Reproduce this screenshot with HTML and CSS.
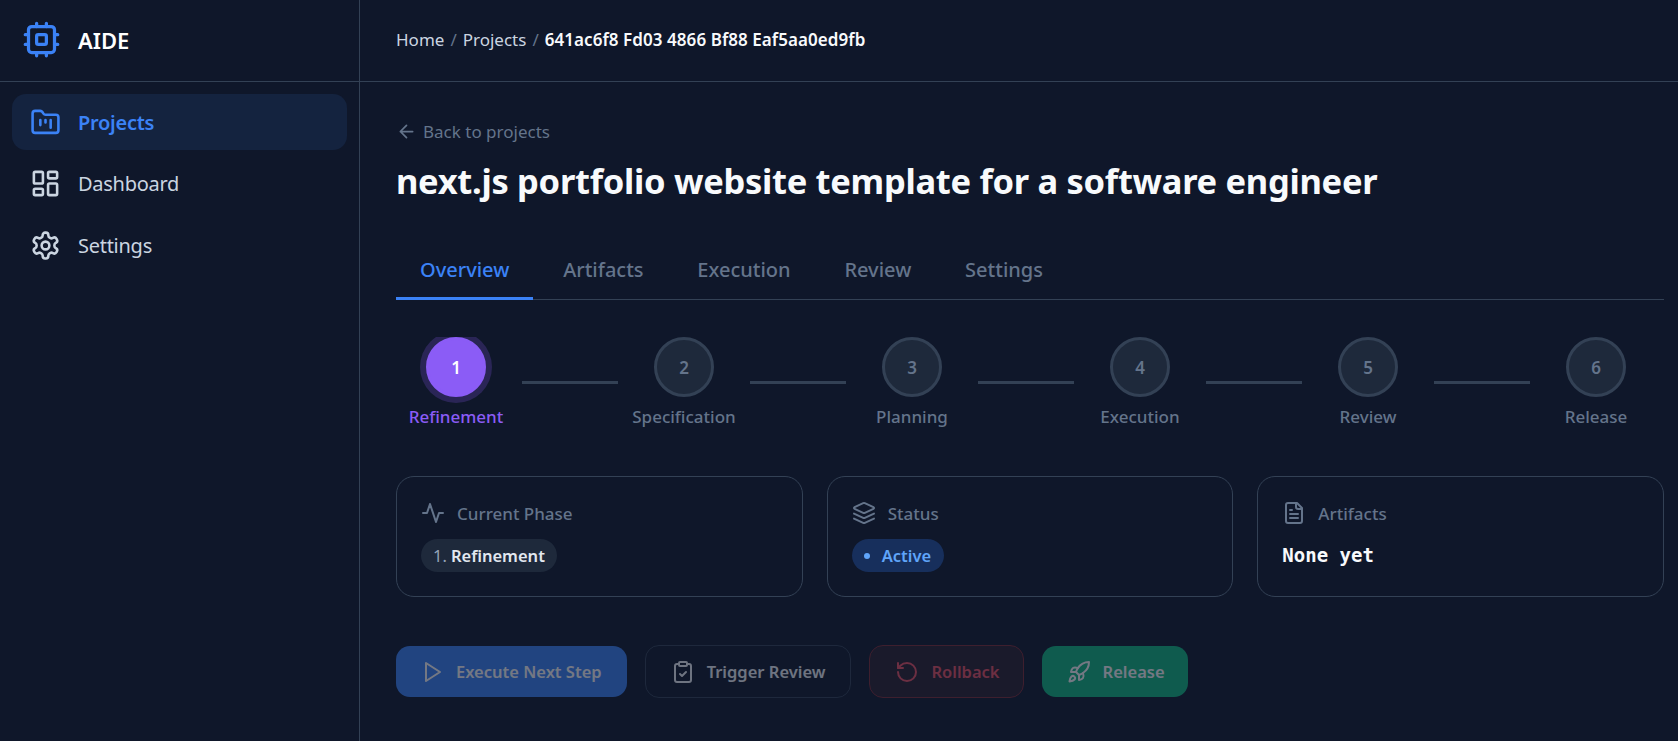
FILE: index.html
```html
<!DOCTYPE html>
<html lang="en">

<head>
	<meta charset="utf-8">
	<meta name="viewport" content="width=device-width, initial-scale=1.0">
	<title>AIDE</title>
	<link rel="stylesheet" href="styles.css">
</head>

<body>
	<div class="app">
		<aside class="sidebar">
			<div class="brand">
				<svg class="brand_icon" viewBox="0 0 24 24"><rect x="4" y="4" width="16" height="16" rx="2"/><rect x="9" y="9" width="6" height="6" rx="1"/><path d="M15 2v2M15 20v2M2 15h2M2 9h2M20 15h2M20 9h2M9 2v2M9 20v2"/></svg>
				<span>AIDE</span>
			</div>
			<nav class="side_nav">
				<a class="side_link active">
					<svg class="side_icon" viewBox="0 0 24 24"><path d="M4 20h16a2 2 0 0 0 2-2V8a2 2 0 0 0-2-2h-7.93a2 2 0 0 1-1.66-.9l-.82-1.2A2 2 0 0 0 7.93 3H4a2 2 0 0 0-2 2v13c0 1.1.9 2 2 2Z"/><path d="M8 10v4M12 10v2M16 10v6"/></svg>
					Projects
				</a>
				<a class="side_link">
					<svg class="side_icon" viewBox="0 0 24 24"><rect width="7" height="9" x="3" y="3" rx="1"/><rect width="7" height="5" x="14" y="3" rx="1"/><rect width="7" height="9" x="14" y="12" rx="1"/><rect width="7" height="5" x="3" y="16" rx="1"/></svg>
					Dashboard
				</a>
				<a class="side_link">
					<svg class="side_icon" viewBox="0 0 24 24"><path d="M12.22 2h-.44a2 2 0 0 0-2 2v.18a2 2 0 0 1-1 1.73l-.43.25a2 2 0 0 1-2 0l-.15-.08a2 2 0 0 0-2.73.73l-.22.38a2 2 0 0 0 .73 2.73l.15.1a2 2 0 0 1 1 1.72v.51a2 2 0 0 1-1 1.74l-.15.09a2 2 0 0 0-.73 2.73l.22.38a2 2 0 0 0 2.73.73l.15-.08a2 2 0 0 1 2 0l.43.25a2 2 0 0 1 1 1.73V20a2 2 0 0 0 2 2h.44a2 2 0 0 0 2-2v-.18a2 2 0 0 1 1-1.73l.43-.25a2 2 0 0 1 2 0l.15.08a2 2 0 0 0 2.73-.73l.22-.39a2 2 0 0 0-.73-2.73l-.15-.08a2 2 0 0 1-1-1.74v-.5a2 2 0 0 1 1-1.74l.15-.09a2 2 0 0 0 .73-2.73l-.22-.38a2 2 0 0 0-2.73-.73l-.15.08a2 2 0 0 1-2 0l-.43-.25a2 2 0 0 1-1-1.73V4a2 2 0 0 0-2-2z"/><circle cx="12" cy="12" r="3"/></svg>
					Settings
				</a>
			</nav>
		</aside>

		<div class="page">
			<header class="topbar">
				<span>Home</span><span class="sep">/</span><span>Projects</span><span class="sep">/</span><strong>641ac6f8 Fd03 4866 Bf88 Eaf5aa0ed9fb</strong>
			</header>

			<main class="content">
				<a class="back">
					<svg class="back_icon" viewBox="0 0 24 24"><path d="m12 19-7-7 7-7M19 12H5"/></svg>
					Back to projects
				</a>
				<h1>next.js portfolio website template for a software engineer</h1>

				<div class="tabs">
					<button class="tab selected">Overview</button>
					<button class="tab">Artifacts</button>
					<button class="tab">Execution</button>
					<button class="tab">Review</button>
					<button class="tab">Settings</button>
				</div>

				<section class="stepper">
					<div class="step current"><div class="dot">1</div><p>Refinement</p></div>
					<div class="line"></div>
					<div class="step"><div class="dot">2</div><p>Specification</p></div>
					<div class="line"></div>
					<div class="step"><div class="dot">3</div><p>Planning</p></div>
					<div class="line"></div>
					<div class="step"><div class="dot">4</div><p>Execution</p></div>
					<div class="line"></div>
					<div class="step"><div class="dot">5</div><p>Review</p></div>
					<div class="line"></div>
					<div class="step"><div class="dot">6</div><p>Release</p></div>
				</section>

				<section class="cards">
					<article class="card">
						<h3><svg class="card_icon" viewBox="0 0 24 24"><path d="M22 12h-4l-3 9L9 3l-3 9H2"/></svg>Current Phase</h3>
						<span class="pill phase"><span class="num">1.</span> Refinement</span>
					</article>
					<article class="card">
						<h3><svg class="card_icon" viewBox="0 0 24 24"><path d="m12.83 2.18a2 2 0 0 0-1.66 0L2.6 6.08a1 1 0 0 0 0 1.83l8.58 3.91a2 2 0 0 0 1.66 0l8.58-3.9a1 1 0 0 0 0-1.83Z"/><path d="m22 17.65-9.17 4.16a2 2 0 0 1-1.66 0L2 17.65"/><path d="m22 12.65-9.17 4.16a2 2 0 0 1-1.66 0L2 12.65"/></svg>Status</h3>
						<span class="pill active_pill"><span class="pip"></span>Active</span>
					</article>
					<article class="card">
						<h3><svg class="card_icon" viewBox="0 0 24 24"><path d="M15 2H6a2 2 0 0 0-2 2v16a2 2 0 0 0 2 2h12a2 2 0 0 0 2-2V7Z"/><path d="M14 2v4a2 2 0 0 0 2 2h4"/><path d="M10 9H8M16 13H8M16 17H8"/></svg>Artifacts</h3>
						<p class="mono">None yet</p>
					</article>
				</section>

				<section class="actions">
					<button class="btn primary">
						<svg class="btn_icon" viewBox="0 0 24 24"><polygon points="6 3 20 12 6 21 6 3"/></svg>Execute Next Step
					</button>
					<button class="btn outline">
						<svg class="btn_icon" viewBox="0 0 24 24"><rect width="8" height="4" x="8" y="2" rx="1"/><path d="M16 4h2a2 2 0 0 1 2 2v14a2 2 0 0 1-2 2H6a2 2 0 0 1-2-2V6a2 2 0 0 1 2-2h2"/><path d="m9 14 2 2 4-4"/></svg>Trigger Review
					</button>
					<button class="btn danger">
						<svg class="btn_icon" viewBox="0 0 24 24"><path d="M3 12a9 9 0 1 0 9-9 9.75 9.75 0 0 0-6.74 2.74L3 8"/><path d="M3 3v5h5"/></svg>Rollback
					</button>
					<button class="btn release">
						<svg class="btn_icon" viewBox="0 0 24 24"><path d="M4.5 16.5c-1.5 1.26-2 5-2 5s3.74-.5 5-2c.71-.84.7-2.13-.09-2.91a2.18 2.18 0 0 0-2.91-.09z"/><path d="m12 15-3-3a22 22 0 0 1 2-3.95A12.88 12.88 0 0 1 22 2c0 2.72-.78 7.5-6 11a22.35 22.35 0 0 1-4 2z"/><path d="M9 12H4s.55-3.03 2-4c1.62-1.08 5 0 5 0"/><path d="M12 15v5s3.03-.55 4-2c1.08-1.62 0-5 0-5"/></svg>Release
					</button>
				</section>
			</main>
		</div>
	</div>
</body>

</html>
```

FILE: styles.css
```css
* {
	margin: 0;
	box-sizing: border-box;
}

html,
body {
	height: 100%;
	overflow: hidden;
}

body {
	background-color: #0f172a;
	color: #fff;
	font-family: "Noto Sans", "Open Sans", sans-serif;
}

svg {
	fill: none;
	stroke: currentColor;
	stroke-width: 2;
	stroke-linecap: round;
	stroke-linejoin: round;
	flex-shrink: 0;
}

.app {
	display: flex;
	height: 100%;
}

.sidebar {
	width: 360px;
	flex-shrink: 0;
	border-right: 1px solid #334155;
}

.brand {
	display: flex;
	align-items: center;
	gap: 17px;
	height: 82px;
	padding: 0 0 2px 22px;
	border-bottom: 1px solid #334155;
	font-size: 22px;
	font-weight: 600;
}

.brand_icon {
	width: 39px;
	height: 39px;
	color: #3b82f6;
}

.side_nav {
	display: flex;
	flex-direction: column;
	gap: 5.5px;
	padding: 12px;
}

.side_link {
	display: flex;
	align-items: center;
	gap: 17px;
	height: 56px;
	padding-left: 18px;
	border-radius: 14px;
	color: #cbd5e1;
	font-size: 20px;
	letter-spacing: -0.27px;
}

.side_link.active {
	background-color: #14233f;
	color: #3b82f6;
	font-weight: 600;
}

.side_icon {
	width: 31px;
	height: 31px;
}

.topbar {
	display: flex;
	align-items: center;
	height: 82px;
	padding: 0 0 2px 36px;
	border-bottom: 1px solid #334155;
	color: #cbd5e1;
	font-size: 17px;
}

.topbar strong {
	color: #f8fafc;
	font-weight: 600;
	letter-spacing: 0.06px;
}

.sep {
	margin: 0 6px;
	color: #64748b;
}

.page {
	flex: 1;
	min-width: 0;
}

.content {
	padding: 35px 14px 0 36px;
}

.back {
	display: flex;
	align-items: center;
	gap: 6px;
	height: 28px;
	color: #64748b;
	font-size: 17px;
}

.back_icon {
	width: 21px;
	height: 21px;
}

h1 {
	margin-top: 12px;
	font-size: 34.5px;
	font-weight: 700;
	line-height: 48px;
	letter-spacing: -0.3px;
	color: #f8fafc;
}

.tabs {
	display: flex;
	gap: 5.8px;
	margin-top: 36px;
	border-bottom: 1px solid #334155;
}

.tab {
	height: 59px;
	margin-bottom: -1px;
	padding: 0 24px;
	border: 0;
	border-bottom: 3px solid transparent;
	background: none;
	color: #64748b;
	font-family: inherit;
	font-size: 20px;
	font-weight: 500;
}

.tab.selected {
	border-bottom-color: #3b82f6;
	color: #3b82f6;
}

.stepper {
	display: flex;
	margin-top: 37px;
	height: 104px;
	overflow: hidden;
}

.step {
	width: 120px;
	flex-shrink: 0;
	text-align: center;
}

.dot {
	display: flex;
	align-items: center;
	justify-content: center;
	width: 60px;
	height: 60px;
	margin: 0 auto;
	border: 3px solid #334155;
	border-radius: 50%;
	background-color: #1e293b;
	color: #64748b;
	font-size: 17px;
	font-weight: 600;
}

.step p {
	margin-top: 8px;
	color: #64748b;
	font-size: 17px;
	font-weight: 500;
	white-space: nowrap;
}

.current .dot {
	border-color: #8b5cf6;
	background-color: #8b5cf6;
	box-shadow: 0 0 0 6px rgba(139, 92, 246, 0.22);
	color: #fff;
}

.current p {
	color: #8b5cf6;
}

.line {
	width: 96px;
	height: 3px;
	margin: 44px 6px 0;
	flex-shrink: 0;
	background-color: #334155;
}

.cards {
	display: grid;
	grid-template-columns: repeat(3, 1fr);
	gap: 24px;
	margin-top: 35px;
}

.card {
	height: 121px;
	padding: 24px 24px;
	border: 1px solid #334155;
	border-radius: 18px;
}

.card h3 {
	display: flex;
	align-items: center;
	gap: 12px;
	color: #64748b;
	font-size: 17px;
	font-weight: 500;
}

.card_icon {
	width: 24px;
	height: 24px;
}

.pill {
	display: inline-flex;
	align-items: center;
	height: 33px;
	margin-top: 14px;
	padding: 0 12px;
	border-radius: 17px;
	font-size: 16.5px;
	font-weight: 600;
}

.phase {
	background-color: #1e293b;
	color: #e2e8f0;
}

.num {
	margin-right: 4px;
	color: #94a3b8;
	font-weight: 400;
}

.active_pill {
	gap: 12px;
	padding-right: 13px;
	background-color: #172f5c;
	color: #60a5fa;
}

.pip {
	width: 6px;
	height: 6px;
	border-radius: 50%;
	background-color: #60a5fa;
}

.mono {
	margin-top: 19px;
	color: #f8fafc;
	font-family: "DejaVu Sans Mono", monospace;
	font-size: 19px;
	font-weight: 700;
}

.actions {
	display: flex;
	gap: 18px;
	margin-top: 48px;
	align-items: center;
}

.btn {
	display: flex;
	align-items: center;
	justify-content: center;
	gap: 12px;
	height: 53px;
	padding: 0 24px;
	border: 1px solid transparent;
	border-radius: 14px;
	color: #fff;
	font-family: inherit;
	font-size: 16.5px;
	font-weight: 600;
	opacity: 0.42;
}

.btn_icon {
	width: 24px;
	height: 24px;
}

.primary {
	background-color: #3b82f6;
	height: 51px;
	padding: 0 24px 0 23px;
}

.outline {
	padding: 0 25px;
	border-color: #334155;
	background-color: #0f172a;
	color: #f1f5f9;
}

.danger {
	border-color: #7f2a35;
	background-color: #2a1f2d;
	color: #ec5065;
	padding: 0 23px 0 25px;
}

.release {
	background-color: #10b981;
	height: 51px;
	padding: 0 22px 0 24px;
}
```
